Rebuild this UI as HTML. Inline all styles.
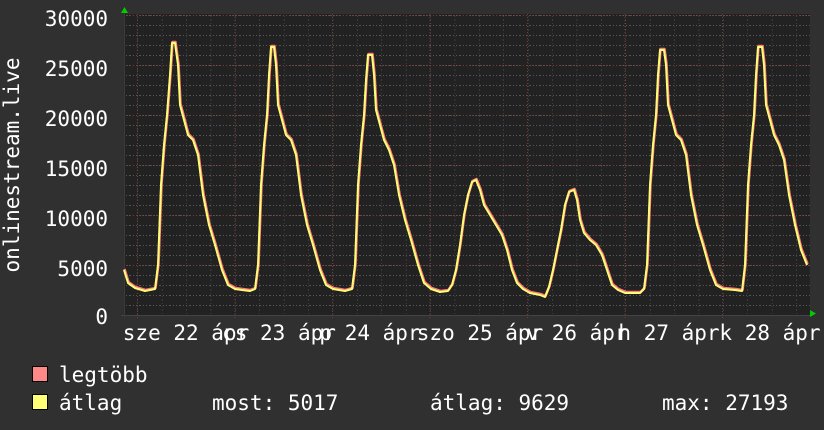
<!DOCTYPE html>
<html><head><meta charset="utf-8"><style>
html,body{margin:0;padding:0;background:#303030;}
svg{display:block;font-family:"DejaVu Sans Mono","Liberation Mono",monospace;}
</style></head><body>
<svg width="824" height="430" viewBox="0 0 824 430" xmlns="http://www.w3.org/2000/svg">
<defs>
<pattern id="hg" x="0" y="5" width="10" height="10" patternUnits="userSpaceOnUse">
<line x1="0" y1="0.5" x2="10" y2="0.5" stroke="#555" stroke-dasharray="1,2"/>
</pattern>
<pattern id="vg" x="137.5" y="0" width="24.4" height="10" patternUnits="userSpaceOnUse">
<line x1="0" y1="0" x2="0" y2="10" stroke="#555" stroke-dasharray="1,2"/>
</pattern>
</defs>
<rect width="824" height="430" fill="#303030"/>
<rect x="124" y="14" width="686" height="301" fill="#222"/>
<rect x="124" y="14" width="686" height="301" fill="url(#hg)"/>
<rect x="124" y="14" width="686" height="301" fill="url(#vg)"/>
<g stroke="#7a3a3a" stroke-dasharray="1,2">
<line x1="124" y1="15.5" x2="810" y2="15.5"/><line x1="124" y1="65.5" x2="810" y2="65.5"/>
<line x1="124" y1="115.5" x2="810" y2="115.5"/><line x1="124" y1="165.5" x2="810" y2="165.5"/>
<line x1="124" y1="215.5" x2="810" y2="215.5"/><line x1="124" y1="265.5" x2="810" y2="265.5"/>
<line x1="137.5" y1="14" x2="137.5" y2="318"/><line x1="235" y1="14" x2="235" y2="318"/>
<line x1="332.5" y1="14" x2="332.5" y2="318"/><line x1="430" y1="14" x2="430" y2="318"/>
<line x1="527.5" y1="14" x2="527.5" y2="318"/><line x1="625" y1="14" x2="625" y2="318"/>
<line x1="722.5" y1="14" x2="722.5" y2="318"/>
</g>
<line x1="121" y1="315.5" x2="812" y2="315.5" stroke="#444"/>
<line x1="124.5" y1="12" x2="124.5" y2="318" stroke="#3a3a3a"/>
<polygon points="121,13 124.5,7 128,13" fill="#0c0"/>
<polygon points="810,310 816,313.5 810,317" fill="#0c0"/>
<g fill="none" stroke-linejoin="round">
<polyline stroke="#f77" stroke-width="2.6" transform="translate(0.5,-1)" points="124,270 128,283 135,288 145,291 155,289 158,265 161,185 164,145 167,115 170,75 172,43 175,43 178,65 180,105 184,120 188,135 193,140 198,155 203,195 209,225 215,245 222,270 228,285 235,289 242,290 250,291 255,289 258,265 261,185 264,145 267,115 269,75 271,47 274,47 276,65 278,105 282,120 286,135 291,140 296,155 301,195 307,225 313,245 320,270 326,285 333,289 345,291 352,289 355,265 358,185 361,145 364,115 366,80 368,55 372,55 374,75 376,110 380,125 384,140 389,150 394,165 399,195 405,220 411,240 418,265 424,283 431,289 440,292 448,291 452,285 456,270 460,245 464,215 468,195 472,182 476,180 480,190 484,205 490,215 496,225 502,235 507,250 512,270 517,283 523,289 530,293 540,295 545,297 549,287 553,270 557,250 561,230 565,205 569,192 574,190 577,200 580,220 584,233 590,240 596,245 602,255 607,270 612,285 618,290 625,293 640,293 644,289 647,265 650,185 653,145 656,115 658,75 660,50 664,50 666,65 668,105 672,120 676,135 681,140 686,155 691,195 697,225 703,245 710,270 716,285 723,289 735,290 742,291 745,265 748,185 751,145 754,115 756,75 758,47 762,47 764,65 766,105 770,120 774,135 779,145 784,160 789,195 795,225 801,250 807,265"/>
<polyline stroke="#ff7" stroke-width="2" points="124,270 128,283 135,288 145,291 155,289 158,265 161,185 164,145 167,115 170,75 172,43 175,43 178,65 180,105 184,120 188,135 193,140 198,155 203,195 209,225 215,245 222,270 228,285 235,289 242,290 250,291 255,289 258,265 261,185 264,145 267,115 269,75 271,47 274,47 276,65 278,105 282,120 286,135 291,140 296,155 301,195 307,225 313,245 320,270 326,285 333,289 345,291 352,289 355,265 358,185 361,145 364,115 366,80 368,55 372,55 374,75 376,110 380,125 384,140 389,150 394,165 399,195 405,220 411,240 418,265 424,283 431,289 440,292 448,291 452,285 456,270 460,245 464,215 468,195 472,182 476,180 480,190 484,205 490,215 496,225 502,235 507,250 512,270 517,283 523,289 530,293 540,295 545,297 549,287 553,270 557,250 561,230 565,205 569,192 574,190 577,200 580,220 584,233 590,240 596,245 602,255 607,270 612,285 618,290 625,293 640,293 644,289 647,265 650,185 653,145 656,115 658,75 660,50 664,50 666,65 668,105 672,120 676,135 681,140 686,155 691,195 697,225 703,245 710,270 716,285 723,289 735,290 742,291 745,265 748,185 751,145 754,115 756,75 758,47 762,47 764,65 766,105 770,120 774,135 779,145 784,160 789,195 795,225 801,250 807,265"/>
</g>
<g fill="#fff" font-size="21" text-anchor="end">
<text x="108" y="26">30000</text><text x="108" y="76">25000</text>
<text x="108" y="126">20000</text><text x="108" y="176">15000</text>
<text x="108" y="226">10000</text><text x="108" y="276">5000</text>
<text x="108" y="324">0</text>
</g>
<text transform="translate(19,165) rotate(-90)" fill="#fff" font-size="21" text-anchor="middle">onlinestream.live</text>
<g fill="#fff" font-size="21" text-anchor="middle">
<text x="186" y="340">sze 22 ápr</text>
<text x="279" y="340">cs 23 ápr</text>
<text x="370" y="340">p 24 ápr</text>
<text x="480" y="340">szo 25 ápr</text>
<text x="577" y="340">v 26 ápr</text>
<text x="669" y="340">h 27 ápr</text>
<text x="770" y="340">k 28 ápr</text>
</g>
<rect x="32.5" y="366.5" width="15" height="15" fill="#f88" stroke="#000"/>
<rect x="32.5" y="394.5" width="15" height="15" fill="#ff7" stroke="#000"/>
<g fill="#fff" font-size="21">
<text x="59" y="382">legtöbb</text>
<text x="59" y="410">átlag</text>
<text x="212" y="410">most: 5017</text>
<text x="430" y="410">átlag: 9629</text>
<text x="662" y="410">max: 27193</text>
</g>
</svg>
</body></html>
